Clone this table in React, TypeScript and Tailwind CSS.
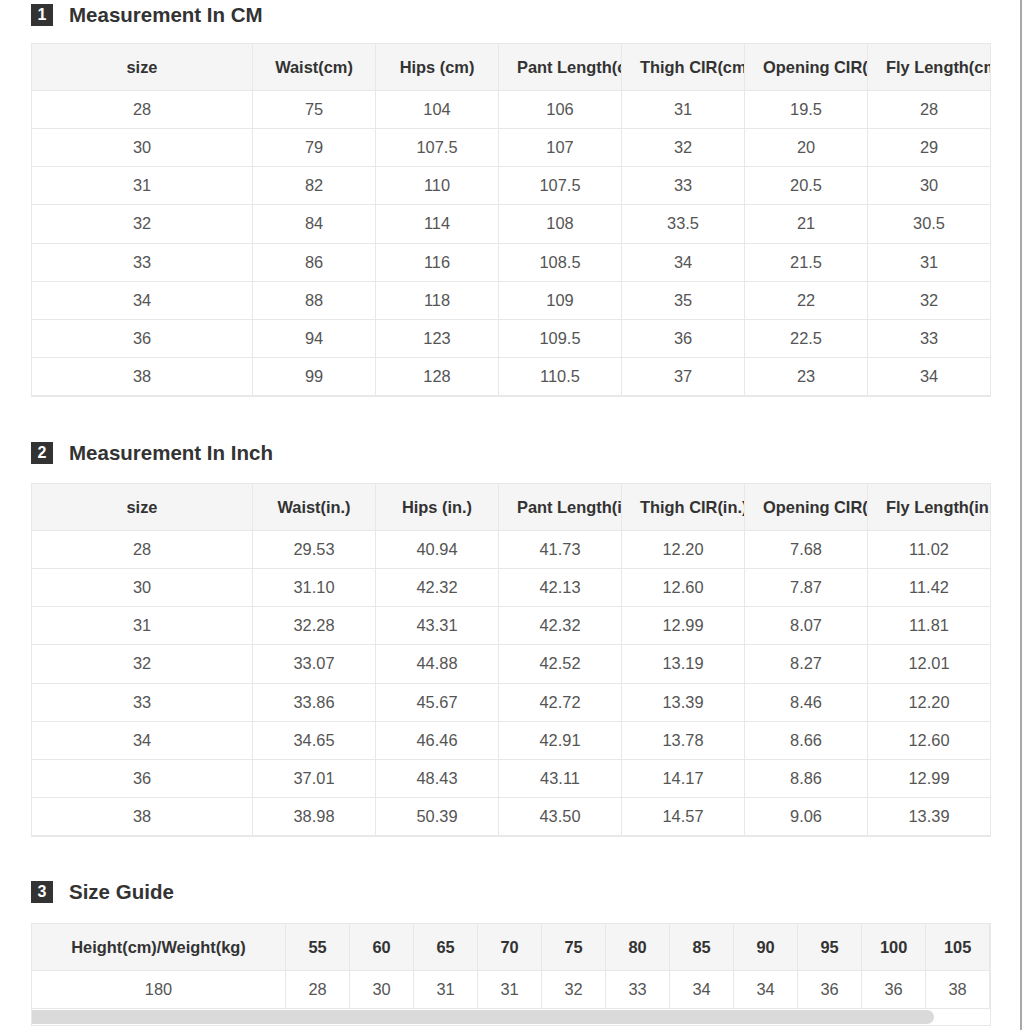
import React from "react";

const cmHead = ["size", "Waist(cm)", "Hips (cm)", "Pant Length(cm)", "Thigh CIR(cm)", "Opening CIR(cm)", "Fly Length(cm)"];
const cmRows = [
  ["28", "75", "104", "106", "31", "19.5", "28"],
  ["30", "79", "107.5", "107", "32", "20", "29"],
  ["31", "82", "110", "107.5", "33", "20.5", "30"],
  ["32", "84", "114", "108", "33.5", "21", "30.5"],
  ["33", "86", "116", "108.5", "34", "21.5", "31"],
  ["34", "88", "118", "109", "35", "22", "32"],
  ["36", "94", "123", "109.5", "36", "22.5", "33"],
  ["38", "99", "128", "110.5", "37", "23", "34"],
];
const inHead = ["size", "Waist(in.)", "Hips (in.)", "Pant Length(in.)", "Thigh CIR(in.)", "Opening CIR(in.)", "Fly Length(in.)"];
const inRows = [
  ["28", "29.53", "40.94", "41.73", "12.20", "7.68", "11.02"],
  ["30", "31.10", "42.32", "42.13", "12.60", "7.87", "11.42"],
  ["31", "32.28", "43.31", "42.32", "12.99", "8.07", "11.81"],
  ["32", "33.07", "44.88", "42.52", "13.19", "8.27", "12.01"],
  ["33", "33.86", "45.67", "42.72", "13.39", "8.46", "12.20"],
  ["34", "34.65", "46.46", "42.91", "13.78", "8.66", "12.60"],
  ["36", "37.01", "48.43", "43.11", "14.17", "8.86", "12.99"],
  ["38", "38.98", "50.39", "43.50", "14.57", "9.06", "13.39"],
];
const guideHead = ["Height(cm)/Weight(kg)", "55", "60", "65", "70", "75", "80", "85", "90", "95", "100", "105", "110"];
const guideRow = ["180", "28", "30", "31", "31", "32", "33", "34", "34", "36", "36", "38", "38"];

function Heading({ n, title }: { n: string; title: string }) {
  return (
    <div className="flex items-center h-[22px]">
      <div className="w-[22px] h-[22px] bg-[#333333] text-white font-bold text-[16px] leading-[22px] text-center">{n}</div>
      <div className="ml-[16px] text-[20.5px] font-bold text-[#333333] leading-[22px]">{title}</div>
    </div>
  );
}

function Cell({ text, head, last }: { text: string; head?: boolean; last?: boolean }) {
  return (
    <div
      className={
        "overflow-hidden whitespace-nowrap text-center px-[18px] border-[#e8e8e8] " +
        (last ? "" : "border-r ") +
        (head
          ? "h-[47px] leading-[46px] bg-[#f5f5f5] font-bold text-[#333333] border-b"
          : "h-[38.125px] leading-[37px] text-[#555555] border-b")
      }
    >
      {text}
    </div>
  );
}

function MeasureTable({ head, rows }: { head: string[]; rows: string[][] }) {
  return (
    <div className="w-[960px] border border-[#e8e8e8] overflow-hidden">
      <div className="grid grid-cols-[221px_repeat(6,123px)] w-max text-[16.4px]">
        {head.map((h, i) => (
          <Cell key={"h" + i} text={h} head />
        ))}
        {rows.map((r, ri) =>
          r.map((c, ci) => <Cell key={ri + "-" + ci} text={c} />)
        )}
      </div>
    </div>
  );
}

function GuideTable() {
  return (
    <div className="w-[960px] border border-[#e8e8e8] overflow-hidden">
      <div className="grid grid-cols-[254px_repeat(12,64px)] w-max text-[16.4px]">
        {guideHead.map((h, i) => (
          <Cell key={"g" + i} text={h} head />
        ))}
        {guideRow.map((c, i) => (
          <Cell key={"r" + i} text={c} />
        ))}
      </div>
      <div className="h-[16px] pt-[1px] pb-[1px]">
        <div className="h-[14px] w-[902px] bg-[#dadada] rounded-r-[7px]" />
      </div>
    </div>
  );
}

export default function App() {
  return (
    <div
      className="w-[1022px] min-h-[1030px] border-r-2 border-[#a8a8a8] bg-white pl-[31px] pt-[4px]"
      style={{ fontFamily: '"Liberation Sans", Arial, sans-serif' }}
    >
      <Heading n="1" title="Measurement In CM" />
      <div className="mt-[17px]">
        <MeasureTable head={cmHead} rows={cmRows} />
      </div>
      <div className="mt-[45px]">
        <Heading n="2" title="Measurement In Inch" />
      </div>
      <div className="mt-[19px]">
        <MeasureTable head={inHead} rows={inRows} />
      </div>
      <div className="mt-[44px]">
        <Heading n="3" title="Size Guide" />
      </div>
      <div className="mt-[20px]">
        <GuideTable />
      </div>
    </div>
  );
}
